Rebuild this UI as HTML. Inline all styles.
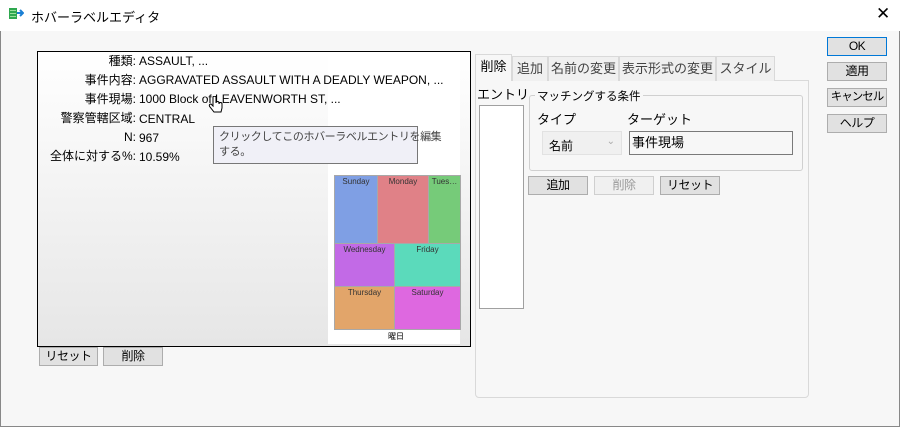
<!DOCTYPE html>
<html><head><meta charset="utf-8"><style>
*{box-sizing:border-box;margin:0;padding:0}
body{width:900px;height:427px;overflow:hidden;background:#f7f7f7;font-family:"Liberation Sans","Noto Sans CJK JP",sans-serif;font-size:12px;color:#000;position:relative}
.abs{position:absolute}
.title{left:0;top:0;width:900px;height:31px;background:#fff}
.btn{position:absolute;background:#e1e1e1;border:1px solid #adadad;text-align:center;font-size:12px;line-height:16px;white-space:nowrap;letter-spacing:-0.5px}
.lbl{position:absolute;right:0;text-align:right;white-space:nowrap}
.tm{position:absolute;font-size:8px;text-align:center;line-height:11px;border:1px solid #a8a8a8;color:#333}
.tab{position:absolute;top:56px;height:25px;background:#f0f0f0;border:1px solid #d9d9d9;border-bottom:none;font-size:13px;color:#444;text-align:center;line-height:24px;white-space:nowrap}
</style></head><body>
<div class="abs title"></div>
<svg class="abs" style="left:8px;top:6px" width="16" height="16"><rect x="1" y="2" width="8" height="11" fill="#2fa84f"/><rect x="2" y="4" width="6" height="1" fill="#9be09b"/><rect x="2" y="7" width="6" height="1" fill="#9be09b"/><rect x="2" y="10" width="6" height="1" fill="#9be09b"/><path d="M9 7 L15 7 M12 4 L15 7 L12 10" stroke="#1a7fd4" stroke-width="2" fill="none"/></svg>
<div class="abs" style="left:31px;top:7px;font-size:13px">ホバーラベルエディタ</div>
<div class="abs" style="left:876px;top:4px;font-size:17px">✕</div>
<div class="abs" style="left:0;top:31px;width:1px;height:396px;background:#888"></div>
<div class="abs" style="left:899px;top:31px;width:1px;height:396px;background:#888"></div>
<div class="abs" style="left:0;top:426px;width:900px;height:1px;background:#888"></div>

<div class="abs" style="left:37px;top:51px;width:434px;height:296px;border:1px solid #000;background:linear-gradient(#fff,#e6e6e6)">
  <div class="abs" style="left:290px;top:0;width:132px;height:292px;background:#fff"></div>
  <div class="abs" style="left:0;top:0;width:98px;height:130px;font-size:12px;line-height:19.2px">
    <div class="lbl" style="top:0">種類:</div>
    <div class="lbl" style="top:19px">事件内容:</div>
    <div class="lbl" style="top:38px">事件現場:</div>
    <div class="lbl" style="top:57px">警察管轄区域:</div>
    <div class="lbl" style="top:76px">N:</div>
    <div class="lbl" style="top:95px">全体に対する%:</div>
  </div>
  <div class="abs" style="left:101px;top:0;line-height:19.2px;font-size:12px;white-space:nowrap">
    <div>ASSAULT, ...</div><div>AGGRAVATED ASSAULT WITH A DEADLY WEAPON, ...</div><div>1000 Block of LEAVENWORTH ST, ...</div><div>CENTRAL</div><div>967</div><div>10.59%</div>
  </div>
  <div class="abs" style="left:175px;top:74px;width:205px;height:38px;background:#f0f0f7;border:1px solid #777;font-size:11px;color:#444;padding:3px 5px;line-height:15px;letter-spacing:-0.4px;white-space:nowrap">クリックしてこのホバーラベルエントリを編集<br>する。</div>
  <svg class="abs" style="left:170px;top:44px" width="18" height="20"><path d="M5 1 v9 l-2-2 c-2 0-2 2-1 3 l4 5 h7 l1-4 v-4 c0-2-3-2-3 0 v-1 c0-2-3-2-3 0 v-6 c0-1-3-1-3 0z" fill="#fff" stroke="#000" stroke-width="1"/></svg>
  <div class="tm" style="left:296px;top:123px;width:44px;height:69px;background:#7f9fe4">Sunday</div>
  <div class="tm" style="left:339px;top:123px;width:52px;height:69px;background:#e08187">Monday</div>
  <div class="tm" style="left:390px;top:123px;width:33px;height:69px;background:#76cb79">Tues…</div>
  <div class="tm" style="left:296px;top:191px;width:61px;height:44px;background:#c26ae6">Wednesday</div>
  <div class="tm" style="left:356px;top:191px;width:67px;height:44px;background:#5bdabb">Friday</div>
  <div class="tm" style="left:296px;top:234px;width:61px;height:44px;background:#e2a56a">Thursday</div>
  <div class="tm" style="left:356px;top:234px;width:67px;height:44px;background:#de68e0">Saturday</div>
  <div class="abs" style="left:350px;top:279px;font-size:8px">曜日</div>
</div>
<div class="btn" style="left:39px;top:347px;width:59px;height:19px">リセット</div>
<div class="btn" style="left:103px;top:347px;width:60px;height:19px">削除</div>

<div class="abs" style="left:475px;top:80px;width:334px;height:318px;border:1px solid #d9d9d9;border-radius:0 0 4px 4px;background:#f7f7f7"></div>
<div class="tab" style="left:475px;top:54px;height:27px;width:37px;background:#f7f7f7;color:#000;border-color:#d9d9d9">削除</div>
<div class="tab" style="left:512px;width:36px">追加</div>
<div class="tab" style="left:548px;width:71px">名前の変更</div>
<div class="tab" style="left:619px;width:97px">表示形式の変更</div>
<div class="tab" style="left:716px;width:59px">スタイル</div>
<div class="abs" style="left:477px;top:84px;font-size:13px">エントリ</div>
<div class="abs" style="left:479px;top:105px;width:45px;height:204px;background:#fff;border:1px solid #a0a0a0"></div>
<div class="abs" style="left:529px;top:95px;width:274px;height:76px;border:1px solid #d0d0d0;border-radius:3px"></div>
<div class="abs" style="left:535px;top:88px;background:#f7f7f7;padding:0 2px;font-size:11.5px">マッチングする条件</div>
<div class="abs" style="left:537px;top:109px;font-size:13px">タイプ</div>
<div class="abs" style="left:627px;top:109px;font-size:13px">ターゲット</div>
<div class="abs" style="left:542px;top:131px;width:80px;height:24px;background:#f0f0f0;border:1px solid #e2e2e2;padding:5px 6px;font-size:12px">名前<span style="position:absolute;right:6px;top:4px;color:#aaa;font-size:10px">⌄</span></div>
<div class="abs" style="left:629px;top:131px;width:164px;height:24px;background:#f7f7f7;border:1px solid #7a7a7a;padding:0 2px;font-size:13px">事件現場</div>
<div class="btn" style="left:528px;top:176px;width:60px;height:19px">追加</div>
<div class="btn" style="left:594px;top:176px;width:60px;height:19px;background:#f0f0f0;border-color:#cfcfcf;color:#999">削除</div>
<div class="btn" style="left:660px;top:176px;width:60px;height:19px">リセット</div>

<div class="btn" style="left:827px;top:37px;width:60px;height:19px;border-color:#0078d7">OK</div>
<div class="btn" style="left:827px;top:62px;width:60px;height:19px">適用</div>
<div class="btn" style="left:827px;top:88px;width:60px;height:19px;font-size:11.5px;letter-spacing:-1px">キャンセル</div>
<div class="btn" style="left:827px;top:114px;width:60px;height:19px">ヘルプ</div>
</body></html>
